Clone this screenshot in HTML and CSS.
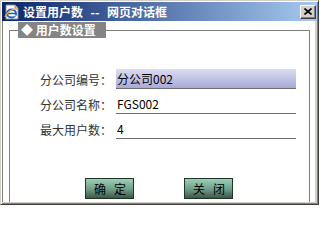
FILE: index.html
```html
<!DOCTYPE html>
<html lang="zh-CN">
<head>
<meta charset="utf-8">
<title>设置用户数 -- 网页对话框</title>
<link rel="stylesheet" href="styles.css">
</head>
<body>
<div class="window">
  <div class="titlebar">
    <svg class="app-icon" width="16" height="16" viewBox="0 0 16 16">
      <path d="M2 1h9l3 3v11H2z" fill="#fff" stroke="#8a8a8a" stroke-width="1"/>
      <path d="M11 1v3h3" fill="#d8d8d8" stroke="#8a8a8a" stroke-width="1"/>
      <ellipse cx="7.5" cy="9.5" rx="4.5" ry="4" fill="none" stroke="#1b5fc9" stroke-width="2"/>
      <path d="M3.5 9.5h8" stroke="#1b5fc9" stroke-width="1.6"/>
      <path d="M11.5 11.5h-3" stroke="#fff" stroke-width="1.6"/>
      <path d="M1 13c2-5 8-9 12-8" fill="none" stroke="#f0b020" stroke-width="1.3"/>
    </svg>
    <span class="title">设置用户数<span class="dash">--</span>网页对话框</span>
    <button class="close" type="button" aria-label="关闭">
      <svg width="8" height="7" viewBox="0 0 8 7"><path d="M0.5 0.5l7 6M7.5 0.5l-7 6" stroke="#000" stroke-width="1.6"/></svg>
    </button>
  </div>
  <div class="content">
    <fieldset class="group">
      <legend class="legend">◆ 用户数设置</legend>
      <div class="form">
        <div class="row">
          <span class="label">分公司编号：</span>
          <input class="field field-readonly" type="text" value="分公司002" readonly>
        </div>
        <div class="row">
          <span class="label">分公司名称：</span>
          <input class="field" type="text" value="FGS002">
        </div>
        <div class="row">
          <span class="label">最大用户数：</span>
          <input class="field" type="text" value="4">
        </div>
      </div>
      <div class="actions">
        <button class="btn" type="button">确定</button>
        <button class="btn" type="button">关闭</button>
      </div>
    </fieldset>
  </div>
</div>
</body>
</html>
```

FILE: styles.css
```css
html, body {
  margin: 0;
  padding: 0;
}
body {
  width: 319px;
  height: 205px;
  overflow: hidden;
  font-family: "Noto Sans CJK SC", "Noto Sans", sans-serif;
  font-size: 12px;
}
.window {
  width: 319px;
  height: 205px;
  box-sizing: border-box;
  background: #d4d0c8;
  border: 1px solid;
  border-color: #d4d0c8 #404040 #404040 #d4d0c8;
  box-shadow: inset 1px 1px 0 #fff, inset -1px -1px 0 #808080;
  padding: 1px 1px 2px 1px;
  display: flex;
  flex-direction: column;
}
.titlebar {
  height: 19px;
  flex: none;
  display: flex;
  align-items: center;
  background: linear-gradient(to right, #0a246a, #a6caf0);
  color: #fff;
  padding-left: 2px;
}
.app-icon {
  flex: none;
  display: block;
}
.title {
  margin-left: 3px;
  font-weight: bold;
  font-size: 12px;
  line-height: 19px;
  white-space: nowrap;
}
.dash {
  display: inline-block;
  width: 24px;
  text-align: center;
}
.close {
  margin-left: auto;
  margin-right: 1px;
  width: 16px;
  height: 14px;
  padding: 0;
  box-sizing: border-box;
  background: #d4d0c8;
  border: 1px solid;
  border-color: #fff #404040 #404040 #fff;
  box-shadow: inset -1px -1px 0 #808080;
  display: flex;
  align-items: center;
  justify-content: center;
}
.close svg {
  display: block;
  margin-top: -1px;
}
.content {
  flex: 1;
  min-height: 0;
  margin-right: 2px;
  background: #fff;
  border-left: 1px solid #808080;
  overflow: hidden;
}
.group {
  margin: 1px 5px 0 6px;
  padding: 0 8px;
  border: 1px solid #808080;
  height: 220px;
  box-sizing: border-box;
  display: block;
  min-width: 0;
}
.legend {
  padding: 0 0 0 3px;
  width: 88px;
  height: 16px;
  box-sizing: border-box;
  line-height: 16px;
  background: #848484;
  color: #fff;
  font-weight: bold;
  font-size: 12px;
  white-space: nowrap;
}
.form {
  margin-top: 31px;
  display: flex;
  flex-direction: column;
  gap: 5px;
}
.row {
  display: flex;
  align-items: center;
  height: 20px;
}
.label {
  margin-left: 22px;
  width: 76px;
  color: #333;
  white-space: nowrap;
  font-size: 12px;
}
.field {
  width: 180px;
  height: 20px;
  box-sizing: border-box;
  margin: 0;
  padding: 0 0 0 1px;
  border: none;
  border-bottom: 1px solid #6f6f6f;
  background: #fff;
  color: #000;
  font-family: "Noto Sans CJK SC", "Noto Sans", sans-serif;
  font-size: 12px;
  outline: none;
}
.field-readonly {
  background: linear-gradient(to bottom, #dcdcf2, #a9a9d8);
}
.actions {
  margin-top: 39px;
  display: flex;
  justify-content: center;
  gap: 50px;
  padding-right: 1px;
}
.btn {
  width: 49px;
  height: 21px;
  box-sizing: border-box;
  margin: 0;
  padding: 0 0 0 8px;
  text-align: left;
  border: 1px solid #1d3628;
  background: linear-gradient(to bottom, #9ccfb8, #6f9c88 55%, #3e5646);
  color: #000;
  font-family: "Noto Sans CJK SC", "Noto Sans", sans-serif;
  font-size: 12px;
  letter-spacing: 8px;
  line-height: 19px;
  white-space: nowrap;
}
```
